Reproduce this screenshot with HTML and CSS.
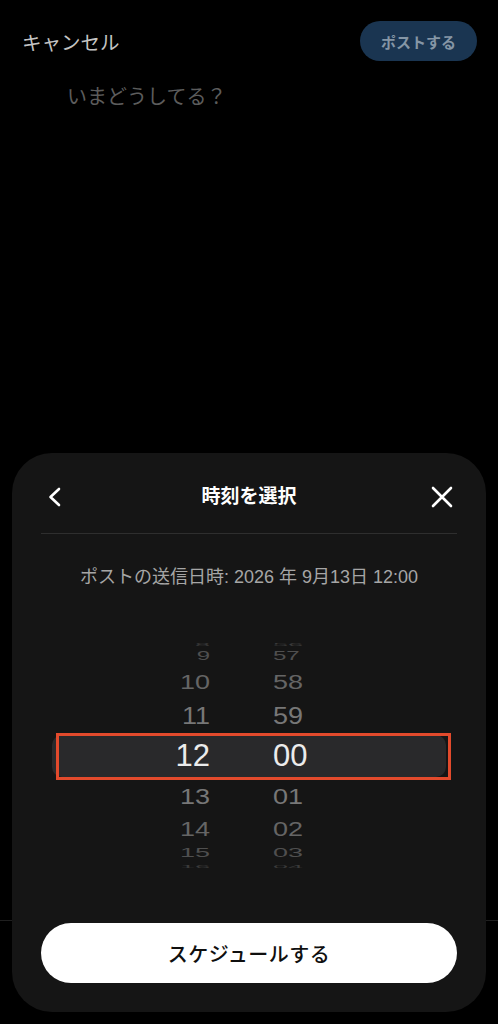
FILE: index.html
```html
<!DOCTYPE html>
<html lang="ja">
<head>
<meta charset="utf-8">
<title>時刻を選択</title>
<link rel="stylesheet" href="styles.css">
</head>
<body>
<div class="screen">
  <header class="topbar">
    <span class="cancel">キャンセル</span>
    <span class="post-btn">ポストする</span>
  </header>
  <div class="composer">いまどうしてる？</div>
  <div class="toolbar-line"></div>

  <section class="sheet">
    <div class="sheet-head">
      <svg class="back" width="14" height="20" viewBox="0 0 14 20"><path d="M12 2 L3.5 10 L12 18" fill="none" stroke="#fff" stroke-width="2.6" stroke-linecap="round" stroke-linejoin="round"/></svg>
      <h1 class="title">時刻を選択</h1>
      <svg class="close" width="22" height="22" viewBox="0 0 22 22"><path d="M2 2 L20 20 M20 2 L2 20" fill="none" stroke="#fff" stroke-width="2.6" stroke-linecap="round"/></svg>
    </div>
    <p class="when">ポストの送信日時: 2026 年 9月13日 12:00</p>

    <div class="picker">
      <div class="highlight"></div>
      <div class="wheel hours">
        <div class="cell u4"><span>8</span></div>
        <div class="cell u3"><span>9</span></div>
        <div class="cell u2"><span>10</span></div>
        <div class="cell u1"><span>11</span></div>
        <div class="cell sel"><span>12</span></div>
        <div class="cell l1"><span>13</span></div>
        <div class="cell l2"><span>14</span></div>
        <div class="cell l3"><span>15</span></div>
        <div class="cell l4"><span>16</span></div>
      </div>
      <div class="wheel minutes">
        <div class="cell u4"><span>56</span></div>
        <div class="cell u3"><span>57</span></div>
        <div class="cell u2"><span>58</span></div>
        <div class="cell u1"><span>59</span></div>
        <div class="cell sel"><span>00</span></div>
        <div class="cell l1"><span>01</span></div>
        <div class="cell l2"><span>02</span></div>
        <div class="cell l3"><span>03</span></div>
        <div class="cell l4"><span>04</span></div>
      </div>
      <div class="annotation"></div>
    </div>

    <button class="schedule">スケジュールする</button>
  </section>
</div>
</body>
</html>
```

FILE: styles.css
```css
* { box-sizing: border-box; }
html, body {
  margin: 0;
  padding: 0;
  background: #000;
}
body {
  font-family: "Liberation Sans", "Noto Sans CJK JP", sans-serif;
  color: #fff;
}
.screen {
  position: relative;
  width: 498px;
  height: 1024px;
  overflow: hidden;
  display: flex;
  flex-direction: column;
}
.topbar {
  display: flex;
  justify-content: space-between;
  align-items: center;
  height: 40px;
  margin: 21px 21px 0 22px;
}
.cancel {
  font-size: 19.5px;
  color: #c4c4c4;
}
.post-btn {
  width: 117px;
  height: 40px;
  border-radius: 20px;
  background: #1a3551;
  color: #8596a6;
  font-size: 15px;
  font-weight: 700;
  display: flex;
  align-items: center;
  justify-content: center;
}
.composer {
  margin-top: 22px;
  padding-left: 67px;
  font-size: 20px;
  line-height: 28px;
  color: #5c5c5c;
}
.toolbar-line {
  position: absolute;
  left: 0;
  right: 0;
  top: 920px;
  height: 1px;
  background: #1f1f1f;
}
.sheet {
  position: relative;
  z-index: 1;
  margin: auto 12px 12px;
  height: 559px;
  background: #151515;
  border-radius: 40px;
  padding: 0 29px 29px;
  display: flex;
  flex-direction: column;
}
.sheet-head {
  height: 81px;
  padding-top: 24px;
  border-bottom: 1px solid #2e2e2e;
  display: grid;
  grid-template-columns: 1fr auto 1fr;
  align-items: start;
}
.sheet-head > * { align-self: center; margin-top: -16px; }
.back { justify-self: start; margin-left: 6px; }
.close { justify-self: end; margin-right: 4px; }
.title {
  margin: -16px 0 0;
  font-size: 19px;
  font-weight: 700;
  color: #fff;
  line-height: 40px;
}
.when {
  margin: 31px 0 0;
  text-align: center;
  font-size: 18px;
  line-height: 24px;
  color: #a6a6a6;
}
.picker {
  position: relative;
  margin-top: 49px;
  display: grid;
  grid-template-columns: 169px 1fr;
  column-gap: 63px;
}
.highlight {
  position: absolute;
  left: 11px;
  top: 97px;
  width: 394px;
  height: 42px;
  border-radius: 10px;
  background: #29292b;
}
.annotation {
  position: absolute;
  left: 15px;
  top: 95px;
  width: 395px;
  height: 47px;
  border: 3px solid #e24a2c;
}
.wheel {
  position: relative;
  display: flex;
  flex-direction: column;
}
.hours .cell { justify-content: flex-end; }
.minutes .cell { justify-content: flex-start; }
.cell {
  display: flex;
  align-items: center;
  font-size: 27px;
  line-height: 1;
}
.cell span { display: block; }
.u4 { height: 12px; color: #3a3a3a; }
.u4 span { transform: scaleY(0.16); }
.u3 { height: 12px; color: #4f4f4f; }
.u3 span { font-size: 24px; transform: scaleY(0.5); }
.u2 { height: 40px; color: #656565; }
.u2 span { transform: scaleY(0.72); }
.u1 { height: 28px; color: #777; }
.u1 span { transform: scaleY(0.9); }
.sel { height: 50px; color: #ebebeb; }
.sel span { font-size: 31px; }
.l1 { height: 32px; color: #777; }
.l1 span { transform: scaleY(0.85); }
.l2 { height: 34px; color: #656565; }
.l2 span { transform: scaleY(0.74); }
.l3 { height: 14px; color: #4f4f4f; }
.l3 span { transform: scaleY(0.46); }
.l4 { height: 12px; color: #3a3a3a; }
.l4 span { transform: scaleY(0.16); }
.schedule {
  margin-top: 51px;
  height: 60px;
  border: none;
  border-radius: 30px;
  background: #fff;
  color: #0f0f0f;
  font-family: "Liberation Sans", "Noto Sans CJK JP", sans-serif;
  font-size: 20px;
  font-weight: 500;
  letter-spacing: 0.5px;
}
```
